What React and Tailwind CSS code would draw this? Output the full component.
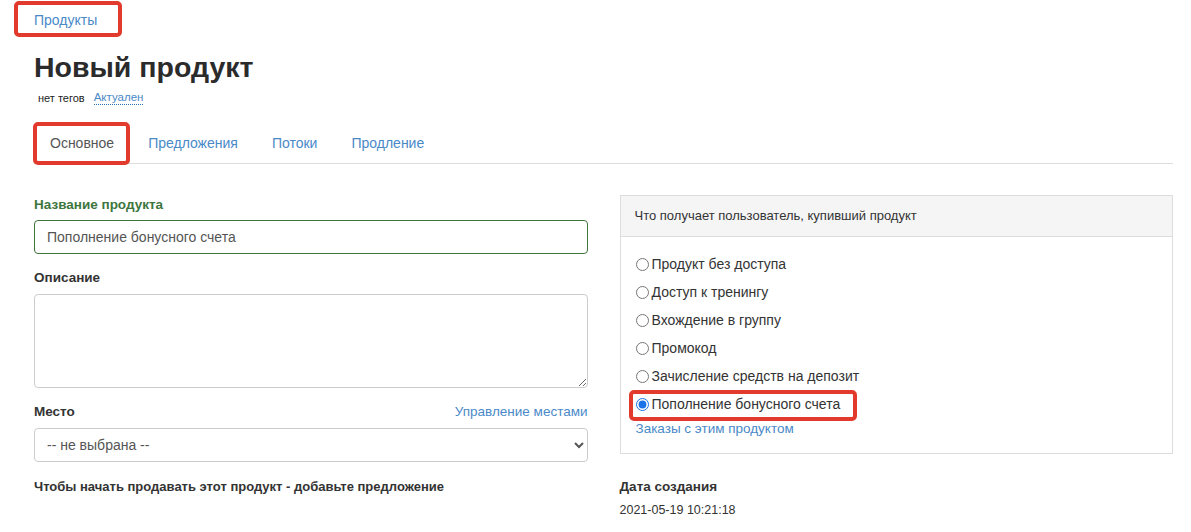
import { useState } from 'react';

const tabs = ['Основное', 'Предложения', 'Потоки', 'Продление'];

const options = [
  'Продукт без доступа',
  'Доступ к тренингу',
  'Вхождение в группу',
  'Промокод',
  'Зачисление средств на депозит',
  'Пополнение бонусного счета',
];

const Mark = ({ className }) => (
  <span className={`pointer-events-none absolute rounded-[5px] border-4 border-[#e23a2c] ${className}`} />
);

const App = () => {
  const [selected, setSelected] = useState(5);

  return (
    <div className="min-h-[532px] bg-white pl-[34px] pr-[18px] font-['Liberation_Sans',Arial,sans-serif] text-[#333]">
      {/* Breadcrumb */}
      <div className="pt-[11px] text-[14px] leading-[18px]">
        <span className="relative inline-block">
          <a href="#" className="text-[#4a89c8]">Продукты</a>
          <Mark className="-left-[20px] -right-[25px] -top-[10px] -bottom-[8px]" />
        </span>
      </div>

      {/* Title */}
      <h1 className="mt-[21px] text-[28.5px] font-bold leading-[34px] text-[#2b2b2b]">Новый продукт</h1>
      <div className="mt-[6px] flex items-center gap-[9px] pl-[4px] text-[11px] leading-[16px]">
        <span className="text-[#222]">нет тегов</span>
        <a href="#" className="border-b border-dotted border-[#2f6fb0] text-[11.5px] leading-[13px] text-[#4a89c8]">Актуален</a>
      </div>

      {/* Tabs */}
      <ul className="mt-[17px] flex gap-[2px] border-b border-[#ddd] text-[14px] leading-[20px]">
        {tabs.map((t, i) => (
          <li key={t} className="relative">
            <a href="#" className={`block px-4 py-[10px] ${i === 0 ? 'text-[#555]' : 'text-[#4a89c8]'}`}>{t}</a>
            {i === 0 && <Mark className="-left-[1px] right-0 -top-[1px] -bottom-[2px]" />}
          </li>
        ))}
      </ul>

      {/* Body */}
      <div className="mt-[31px] grid grid-cols-2 gap-8">
        <div>
          <label className="block pt-[1px] text-[13.5px] font-bold leading-[17px] text-[#3c763d]">Название продукта</label>
          <input
            className="mt-[7px] block h-[34px] w-full rounded-[4px] border border-[#3c763d] px-3 text-[14px] text-[#555] outline-none"
            defaultValue="Пополнение бонусного счета"
          />

          <label className="mt-[15px] block text-[13.5px] font-bold leading-[18px]">Описание</label>
          <textarea className="mt-[7px] block h-[94px] w-full rounded-[4px] border border-[#ccc] px-3 py-2 text-[14px] outline-none" />

          <div className="mt-[15px] flex items-center justify-between text-[13.5px] leading-[18px]">
            <label className="font-bold">Место</label>
            <a href="#" className="text-[#4a89c8]">Управление местами</a>
          </div>
          <select className="mt-[7px] block h-[34px] w-full rounded-[4px] border border-[#ccc] bg-white px-2 text-[14px] text-[#555] outline-none">
            <option>-- не выбрана --</option>
          </select>

          <p className="mt-[16px] text-[13px] font-bold leading-[18px]">
            Чтобы начать продавать этот продукт - добавьте предложение
          </p>
        </div>

        <div>
          <div className="border border-[#ddd]">
            <div className="h-[41px] border-b border-[#ddd] bg-[#f5f5f5] px-[14px] pt-[11px] text-[13px] leading-[18px]">
              Что получает пользователь, купивший продукт
            </div>
            <div className="px-[15px] pt-[13px] pb-[15px] text-[14px]">
              {options.map((o, i) => (
                <label key={o} className="relative flex h-[28px] w-max items-center">
                  <input
                    type="radio"
                    name="kind"
                    checked={selected === i}
                    onChange={() => setSelected(i)}
                    className="m-0 mr-[3px] h-[13px] w-[13px] accent-[#1a73e8]"
                  />
                  <span>{o}</span>
                  {i === 5 && <Mark className="-left-[7px] -right-[17px] top-0 -bottom-[3px]" />}
                </label>
              ))}
              <a href="#" className="mt-[2px] block text-[13.5px] leading-[18px] text-[#4a89c8]">Заказы с этим продуктом</a>
            </div>
          </div>

          <div className="mt-[24px] text-[13.5px] font-bold leading-[18px]">Дата создания</div>
          <div className="mt-[5px] text-[12.5px] leading-[18px]">2021-05-19 10:21:18</div>
        </div>
      </div>
    </div>
  );
};

export default App;
